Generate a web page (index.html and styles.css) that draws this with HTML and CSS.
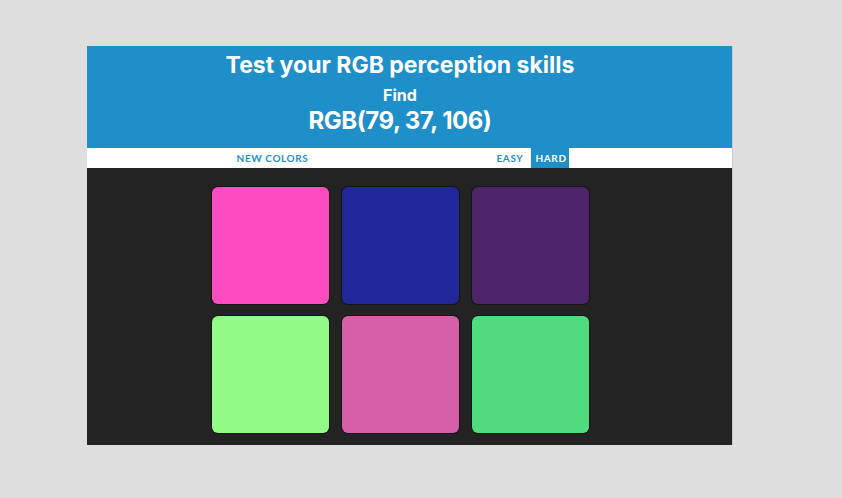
FILE: index.html
```html
<!DOCTYPE html>
<html lang="en">
<head>
<meta charset="utf-8">
<title>RGB Color Game</title>
<link rel="stylesheet" href="styles.css">
</head>
<body>
<div class="panel">
  <header class="hero">
    <h1 class="title">Test your RGB perception skills</h1>
    <div class="find">Find</div>
    <div class="target">RGB(79, 37, 106)</div>
  </header>
  <nav class="stripe">
    <button class="btn btn-new">NEW COLORS</button>
    <span class="message"></span>
    <button class="btn btn-mode">EASY</button>
    <button class="btn btn-mode selected">HARD</button>
  </nav>
  <main class="board">
    <div class="grid">
      <div class="square sq-pink"></div>
      <div class="square sq-navy"></div>
      <div class="square sq-purple"></div>
      <div class="square sq-lime"></div>
      <div class="square sq-rose"></div>
      <div class="square sq-green"></div>
    </div>
  </main>
</div>
</body>
</html>
```
FILE: styles.css
```css
* { box-sizing: border-box; }
html, body { margin: 0; padding: 0; }
body {
  background: #dedede;
  font-family: Inter, Lato, "Liberation Sans", sans-serif;
  height: 498px;
  overflow: hidden;
}
.panel {
  margin: 46px 0 0 87px;
  width: 645px;
  height: 399px;
  display: flex;
  flex-direction: column;
  background: #232323;
  box-shadow: 1px 0 0 #c9c9c9;
}
.hero {
  height: 102px;
  background: #1e8fc8;
  color: #fff;
  text-align: center;
  padding: 5px 19px 0 0;
}
.title {
  margin: 0;
  font-size: 23px;
  line-height: 28px;
  font-weight: 700;
}
.find {
  margin-top: 6px;
  font-size: 16px;
  line-height: 20px;
  font-weight: 700;
}
.target {
  margin-top: 1px;
  font-size: 24px;
  line-height: 30px;
  font-weight: 700;
  letter-spacing: -0.5px;
}
.stripe {
  height: 20px;
  background: #fff;
  display: flex;
  justify-content: center;
  align-items: stretch;
  padding-right: 19px;
}
.btn {
  border: none;
  background: #fff;
  color: #1e8fc8;
  font-family: Lato, "Liberation Sans", sans-serif;
  font-weight: 700;
  font-size: 10px;
  letter-spacing: 0.6px;
  padding: 0 5px;
  margin: 0;
  height: 20px;
  line-height: 20px;
}
.btn-new { width: 82px; }
.message { width: 178px; }
.btn-mode + .btn-mode { margin-left: 3px; }
.btn-mode { width: 36px; }
.btn-mode.selected { width: 38px; background: #1e8fc8; color: #fff; }
.board {
  flex: 1;
  padding: 19px 19px 0 0;
  display: flex;
  justify-content: center;
}
.grid {
  display: grid;
  grid-template-columns: repeat(3, 117px);
  grid-auto-rows: 117px;
  column-gap: 13px;
  row-gap: 12px;
  align-content: start;
}
.square {
  border-radius: 6px;
  box-shadow: 0 0 0 1px #141414;
}
.sq-pink { background: #fd4cc0; }
.sq-navy { background: #1f2799; }
.sq-purple { background: #4f256a; }
.sq-lime { background: #93fc86; }
.sq-rose { background: #d75fa8; }
.sq-green { background: #4fdc7f; }
```
